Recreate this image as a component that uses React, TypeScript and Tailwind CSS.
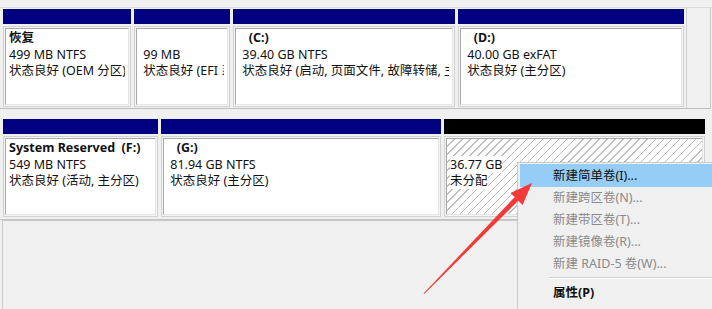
import React from "react";

type Line = { t: string; b?: boolean; bg?: boolean };

function Part({
  w,
  bar,
  lines,
  hatched,
  h,
}: {
  w: string;
  bar: string;
  lines: Line[];
  hatched?: boolean;
  h: string;
}) {
  return (
    <div className={`flex flex-col shrink-0 ${w}`}>
      <div className={`h-[15px] ${bar}`} />
      <div className="mt-[2px] border border-[#d2d2d2] p-[1px] bg-[#f4f4f4]">
        <div
          className={`${h} border-l border-t border-[#a8a8a8] border-r border-b border-r-[#e6e6e6] border-b-[#e6e6e6] pt-[1px] ${
            hatched
              ? "bg-[repeating-linear-gradient(135deg,#ffffff_0px,#ffffff_4.6px,#bdbdbd_4.6px,#bdbdbd_5.7px)]"
              : "bg-white"
          }`}
        >
          <div className="mx-[3px] overflow-hidden">
            {lines.map((l, i) => (
              <div key={i} className="h-[16.5px] leading-[16.5px] whitespace-pre">
                <span className={`${l.b ? "font-bold" : ""} ${l.bg ? "bg-white" : ""}`}>{l.t}</span>
              </div>
            ))}
          </div>
        </div>
      </div>
    </div>
  );
}

export default function App() {
  return (
    <div className="relative w-[712px] h-[309px] overflow-hidden bg-[#f0f0f0] text-[12.5px] text-[#111] font-['Noto_Sans','Noto_Sans_CJK_SC',sans-serif]">
      {/* top strip */}
      <div className="h-[8px] border-b border-[#dadada]" />
      {/* row 1 */}
      <div className="flex w-[711px] border-r border-[#c8c8c8] border-b border-b-[#bdbdbd]">
        <div className="flex gap-[3px] pl-[3px] pt-[1px] pb-[1px] w-[687px] border-r border-[#d0d0d0]">
          <Part
            w="w-[128px]"
            bar="bg-[#000080]"
            h="h-[77px]"
            lines={[{ t: "恢复", b: true }, { t: "499 MB NTFS" }, { t: "状态良好 (OEM 分区)" }]}
          />
          <Part
            w="w-[96px]"
            bar="bg-[#000080]"
            h="h-[77px]"
            lines={[{ t: "" }, { t: " 99 MB" }, { t: " 状态良好 (EFI 系统分区)" }]}
          />
          <Part
            w="w-[222px]"
            bar="bg-[#000080]"
            h="h-[77px]"
            lines={[
              { t: "   (C:)", b: true },
              { t: " 39.40 GB NTFS" },
              { t: " 状态良好 (启动, 页面文件, 故障转储, 主分区)" },
            ]}
          />
          <Part
            w="w-[226px]"
            bar="bg-[#000080]"
            h="h-[77px]"
            lines={[{ t: "   (D:)", b: true }, { t: " 40.00 GB exFAT" }, { t: " 状态良好 (主分区)" }]}
          />
        </div>
      </div>
      {/* gap */}
      <div className="h-[10px]" />
      {/* row 2 */}
      <div className="flex gap-[3px] pl-[3px] pb-[2px] border-b border-[#c4c4c4] w-[708px]">
        <Part
          w="w-[155px]"
          bar="bg-[#000080]"
          h="h-[77px]"
          lines={[
            { t: "System Reserved  (F:)", b: true },
            { t: "549 MB NTFS" },
            { t: "状态良好 (活动, 主分区)" },
          ]}
        />
        <Part
          w="w-[280px]"
          bar="bg-[#000080]"
          h="h-[77px]"
          lines={[{ t: "   (G:)", b: true }, { t: " 81.94 GB NTFS" }, { t: " 状态良好 (主分区)" }]}
        />
        <Part
          w="w-[261px]"
          bar="bg-black"
          h="h-[77px]"
          hatched
          lines={[{ t: "" }, { t: "36.77 GB", bg: true }, { t: "未分配", bg: true }]}
        />
      </div>
      {/* lower area */}
      <div className="h-[90px] ml-[2px] border-l border-t border-[#c8c8c8]" />

      {/* context menu */}
      <div className="absolute left-[517px] top-[162px] w-[200px] h-[160px] bg-[#f0f0f0] border-l border-t border-[#c9c9c9] pt-[1px] pl-[2px]">
        <div className="h-[23px] bg-[#96cdf6] pl-[33px] leading-[23px] text-[#111]">新建简单卷(I)...</div>
        <div className="h-[22px] pl-[33px] leading-[22px] text-[#8a8a8a]">新建跨区卷(N)...</div>
        <div className="h-[22px] pl-[33px] leading-[22px] text-[#8a8a8a]">新建带区卷(T)...</div>
        <div className="h-[22px] pl-[33px] leading-[22px] text-[#8a8a8a]">新建镜像卷(R)...</div>
        <div className="h-[22px] pl-[33px] leading-[22px] text-[#8a8a8a]">新建 RAID-5 卷(W)...</div>
        <div className="ml-[29px] mt-[2px] mb-[3px] border-t border-[#d4d4d4] border-b border-b-white" />
        <div className="h-[22px] pl-[33px] leading-[22px] font-bold text-[#111]">属性(P)</div>
      </div>

      {/* red arrow */}
      <svg className="absolute left-0 top-0 pointer-events-none" width="712" height="309" viewBox="0 0 712 309">
        <polygon points="423.5,293.5 424.5,293.8 518.5,200.5 514.8,196.9" fill="#f23a3a" />
        <polygon points="532,183 522.6,205 510.5,193" fill="#f23a3a" />
      </svg>
    </div>
  );
}
